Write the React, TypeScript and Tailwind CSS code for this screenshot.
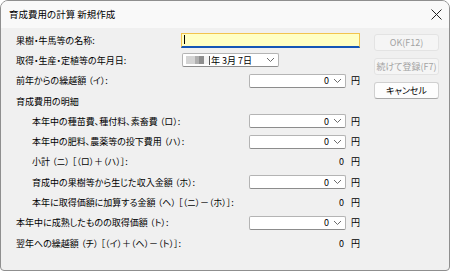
import React from 'react';

const font = "font-['Noto_Sans_CJK_JP','Noto_Sans',sans-serif] [font-feature-settings:'palt']";

const Chevron: React.FC = () => (
  <svg width="9" height="6" viewBox="0 0 9 6" className="shrink-0">
    <path d="M1 1l3.5 3.5L8 1" fill="none" stroke="#6b6b6b" strokeWidth="1" />
  </svg>
);

const AmountBox: React.FC<{ value: string }> = ({ value }) => (
  <div className="flex items-center">
    <div className="flex h-[14px] w-[97px] items-center justify-end rounded-[2px] border border-[#b4b4b4] border-b-[#8c8c8c] bg-white pr-[3px]">
      <span className="mr-[4px] text-[9px] leading-none">{value}</span>
      <Chevron />
    </div>
    <span className="ml-[5px] w-[9px] text-[9px] leading-none">円</span>
  </div>
);

const AmountText: React.FC<{ value: string }> = ({ value }) => (
  <div className="flex items-center">
    <div className="flex w-[97px] justify-end pr-[2px]">
      <span className="text-[9px] leading-none">{value}</span>
    </div>
    <span className="ml-[5px] w-[9px] text-[9px] leading-none">円</span>
  </div>
);

type Row = { label: string; indent?: boolean; kind: 'box' | 'text' | 'none' };

// U+2005 gives the small gap the original font leaves before the brackets
const rows: Row[] = [
  { label: '前年からの繰越額\u2005（イ）:', kind: 'box' },
  { label: '育成費用の明細', kind: 'none' },
  { label: '本年中の種苗費、種付料、素畜費\u2005（ロ）:', indent: true, kind: 'box' },
  { label: '本年中の肥料、農薬等の投下費用\u2005（ハ）:', indent: true, kind: 'box' },
  { label: '小計\u2005（ニ）\u2005［（ロ）＋（ハ）］:', indent: true, kind: 'text' },
  { label: '育成中の果樹等から生じた収入金額\u2005（ホ）:', indent: true, kind: 'box' },
  { label: '本年に取得価額に加算する金額\u2005（ヘ）\u2005［（ニ）－（ホ）］:', indent: true, kind: 'text' },
  { label: '本年中に成熟したものの取得価額\u2005（ト）:', kind: 'box' },
  { label: '翌年への繰越額\u2005（チ）\u2005［（イ）＋（ヘ）－（ト）］:', kind: 'text' },
];

const App: React.FC = () => {
  return (
    <div className={`h-[271px] w-[450px] bg-white text-black ${font}`}>
      <div className="flex h-full flex-col overflow-hidden rounded-t-[8px] rounded-b-[4px] border border-[#8f8f8f] bg-[#f0f0f0]">
        {/* title bar */}
        <div className="flex h-[27px] shrink-0 items-center justify-between bg-[#f9f9f9] pl-[8px] pr-[7px]">
          <span className="text-[9.5px] leading-none">育成費用の計算 新規作成</span>
          <svg width="11" height="11" viewBox="0 0 11 11">
            <path d="M0.5 0.5l10 10M10.5 0.5l-10 10" stroke="#222" strokeWidth="1" />
          </svg>
        </div>

        <div className="flex flex-1 pt-[2px]">
          <div className="w-[359px] pl-[15px]">
            <div className="flex h-[20.3px] items-center">
              <span className="w-[165px] shrink-0 text-[9px] leading-none">果樹・牛馬等の名称:</span>
              <div className="flex h-[15px] flex-1 items-center border border-[#f2c44e] border-b-2 border-b-[#1456b8] bg-[#ffffc4] pl-[2px]">
                <div className="h-[9px] w-px bg-black" />
              </div>
            </div>
            <div className="flex h-[20.3px] items-center">
              <span className="w-[166px] shrink-0 text-[9px] leading-none">取得・生産・定植等の年月日:</span>
              <div className="flex h-[14px] w-[97px] items-center rounded-[2px] border border-[#b4b4b4] border-b-[#8c8c8c] bg-white pl-[3px] pr-[3px]">
                <span className="h-[8px] w-[9px] bg-[#d4d4d4]" />
                <span className="h-[8px] w-[4px] bg-[#b0b0b0]" />
                <span className="h-[8px] w-[5px] bg-[#8e8e8e]" />
                <span className="h-[8px] w-[5px] bg-[#f4f4f4]" />
                <span className="h-[9px] w-px bg-[#555]" />
                <span className="ml-px text-[9px] leading-none">年 3月 7日</span>
                <span className="ml-auto">
                  <Chevron />
                </span>
              </div>
            </div>
            {rows.map((r) => (
              <div key={r.label} className={`flex h-[20.3px] items-center ${r.indent ? 'pl-[16px]' : ''}`}>
                <span className="flex-1 whitespace-nowrap text-[9px] leading-none">{r.label}</span>
                {r.kind === 'box' && <AmountBox value="0" />}
                {r.kind === 'text' && <AmountText value="0" />}
              </div>
            ))}
          </div>

          <div className="ml-[14px] flex w-[65px] flex-col gap-[7px] pt-[4px]">
            <button className="h-[17px] rounded-[3px] border border-[#e3e3e3] bg-[#f5f5f5] text-[9px] leading-none text-[#a3a3a3]">
              OK(F12)
            </button>
            <button className="h-[17px] rounded-[3px] border border-[#e3e3e3] bg-[#f5f5f5] text-[9px] leading-none text-[#a3a3a3]">
              続けて登録(F7)
            </button>
            <button className="h-[17px] rounded-[3px] border border-[#d0d0d0] border-b-[#a8a8a8] bg-[#fdfdfd] text-[9px] leading-none">
              キャンセル
            </button>
          </div>
        </div>
      </div>
    </div>
  );
};

export default App;
